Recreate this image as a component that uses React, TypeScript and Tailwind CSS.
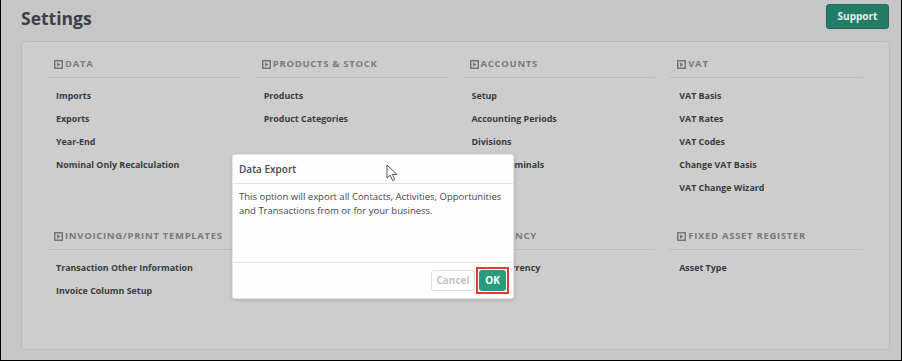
import React from 'react';

type Section = { title: string; links: string[] };

const rowOne: Section[] = [
  { title: 'Data', links: ['Imports', 'Exports', 'Year-End', 'Nominal Only Recalculation'] },
  { title: 'Products & Stock', links: ['Products', 'Product Categories'] },
  { title: 'Accounts', links: ['Setup', 'Accounting Periods', 'Divisions', 'Merge Nominals'] },
  { title: 'VAT', links: ['VAT Basis', 'VAT Rates', 'VAT Codes', 'Change VAT Basis', 'VAT Change Wizard'] },
];

const rowTwo: Section[] = [
  { title: 'Invoicing/Print Templates', links: ['Transaction Other Information', 'Invoice Column Setup'] },
  { title: 'Email', links: ['Templates'] },
  { title: 'Currency', links: ['Home Currency'] },
  { title: 'Fixed Asset Register', links: ['Asset Type'] },
];

function HeadIcon() {
  return (
    <svg width="9" height="9" viewBox="0 0 9 9" className="mr-[2px] shrink-0">
      <rect x="0.75" y="0.75" width="7.5" height="7.5" fill="none" stroke="#6c7177" strokeWidth="1.4" />
      <path d="M3.1 2.3 L6.3 4.5 L3.1 6.7 Z" fill="#6c7177" />
    </svg>
  );
}

function SettingsSection({ s }: { s: Section }) {
  return (
    <div>
      <div className="flex items-center h-[16px] pl-[7px] mb-[5px] text-[9.5px] font-bold uppercase tracking-[0.7px] text-[#757a80]">
        <HeadIcon />
        {s.title}
      </div>
      <div className="border-t border-[#bcbcbc]" />
      <ul className="mt-[6px]">
        {s.links.map((l) => (
          <li key={l} className="h-[23px] flex items-center pl-[9px] text-[8.9px] font-bold text-[#383c41]">
            {l}
          </li>
        ))}
      </ul>
    </div>
  );
}

function Cursor() {
  return (
    <svg width="14" height="19" viewBox="0 0 14 19" className="absolute left-[385px] top-[164px]">
      <path
        d="M1 1 L1 14 L4.2 11.2 L6.6 16.6 L8.8 15.6 L6.4 10.4 L10.8 10.4 Z"
        fill="#ffffff"
        stroke="#555"
        strokeWidth="1"
        strokeLinejoin="round"
      />
    </svg>
  );
}

export default function App() {
  return (
    <div
      className="relative w-[902px] h-[361px] overflow-hidden bg-[#c6c6c6] border-l border-r border-b border-black"
      style={{ fontFamily: '"Open Sans", "Noto Sans", sans-serif' }}
    >
      <div className="flex items-start justify-between pl-[20px] pr-[12px] pt-[4px] h-[41px]">
        <h1 className="text-[17.5px] font-bold text-[#3b4046] leading-[28px]">Settings</h1>
        <button className="w-[63px] h-[25px] rounded-[3px] bg-[#237c66] border border-[#1d6b58] text-[10px] font-bold text-[#e4efec]">
          Support
        </button>
      </div>

      <div className="ml-[20px] w-[869px] h-[309px] rounded-[4px] border border-[#bababa] bg-[#cdcdcd] pt-[14px] pl-[25px] pr-[26px]">
        <div className="grid grid-cols-4 gap-x-[15px] gap-y-[29px]">
          {rowOne.map((s) => (
            <SettingsSection key={s.title} s={s} />
          ))}
          {rowTwo.map((s) => (
            <SettingsSection key={s.title} s={s} />
          ))}
        </div>
      </div>

      <div className="absolute left-[231px] top-[154px] w-[282px] h-[145px] rounded-[3px] bg-[#fefefe] border border-[#e6e6e6] shadow-[0_1px_4px_rgba(0,0,0,0.15)] flex flex-col">
        <div className="h-[29px] flex items-center px-[6px] border-b border-[#e4e4e4] text-[10px] font-semibold text-[#45494e]">
          Data Export
        </div>
        <div className="flex-1 px-[6px] pt-[6px] text-[9.5px] leading-[14px] text-[#43474c]">
          This option will export all Contacts, Activities, Opportunities and Transactions from or for your business.
        </div>
        <div className="h-[36px] border-t border-[#e4e4e4] flex items-center justify-end gap-[1px] pr-[4px]">
          <button className="w-[44px] h-[21px] rounded-[3px] border border-[#dcdcdc] bg-white text-[10px] font-bold text-[#c2c4c6]">
            Cancel
          </button>
          <div className="p-[1px] border-2 border-[#e53935]">
            <button className="block w-[27px] h-[21px] rounded-[3px] bg-[#2a9b7d] text-[10px] font-bold text-white">
              OK
            </button>
          </div>
        </div>
      </div>

      <Cursor />
    </div>
  );
}
